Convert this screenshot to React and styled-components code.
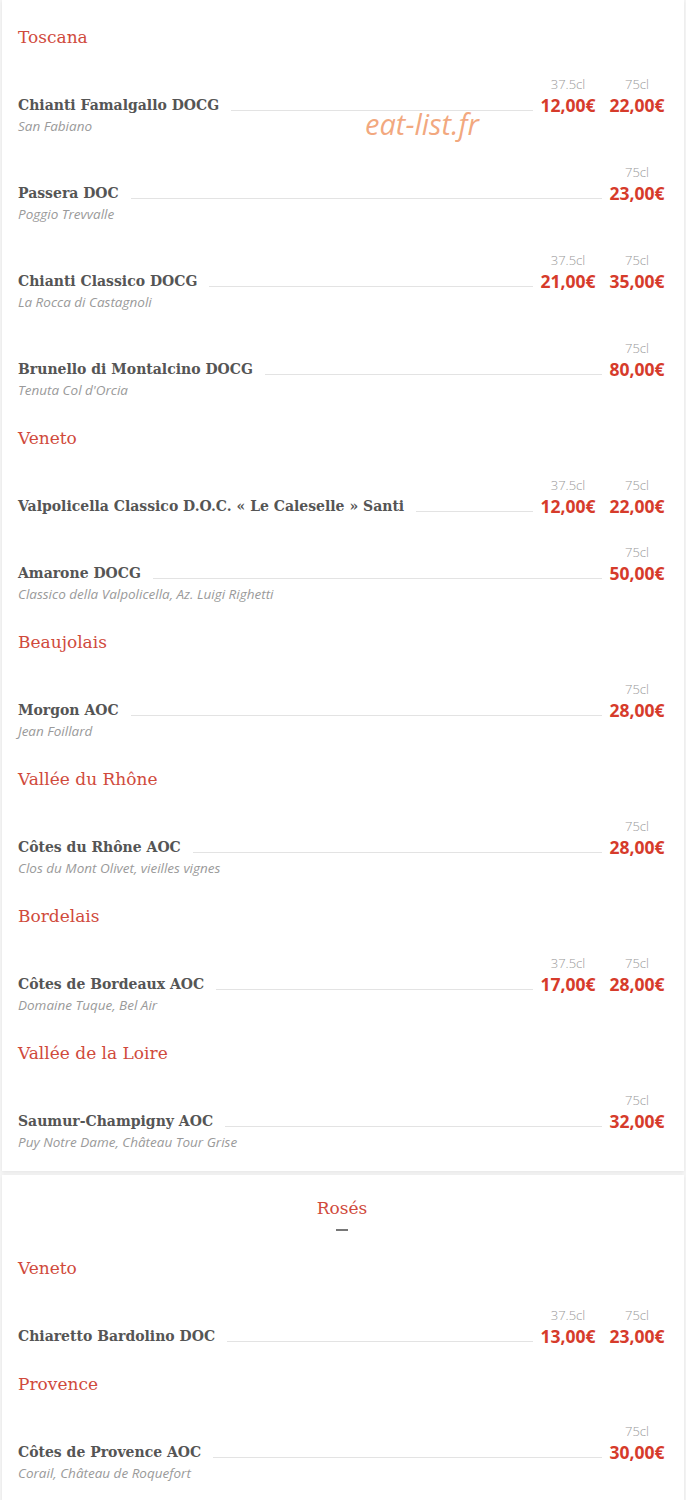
import React from 'react';
import styled, { createGlobalStyle } from 'styled-components';

const GlobalStyle = createGlobalStyle`
  body {
    margin: 0;
    background: #f6f6f6;
    font-family: "Open Sans", "Liberation Sans", sans-serif;
  }
`;

const Page = styled.div`
  display: flex;
  flex-direction: column;
  gap: 4px;
  padding: 0 2px 3px;
`;

const Card = styled.section`
  position: relative;
  background: #fff;
  box-shadow: 0 1px 4px rgba(0, 0, 0, 0.08);
  padding: ${p => (p.$titled ? '21px' : '25px')} 18px 18px 16px;
`;

const Watermark = styled.div`
  position: absolute;
  left: 363px;
  top: 104px;
  font-family: "Open Sans", sans-serif;
  font-style: italic;
  font-size: 29px;
  color: rgba(238, 140, 85, 0.75);
  pointer-events: none;
`;

const CardTitle = styled.h2`
  margin: 0;
  text-align: center;
  font-family: "DejaVu Serif", serif;
  font-weight: normal;
  font-size: 17px;
  line-height: 24px;
  color: #d04a3c;
`;

const Dash = styled.div`
  width: 12px;
  height: 2px;
  background: #777;
  margin: 9px auto 25px;
`;

const Region = styled.h3`
  margin: 0 0 25px;
  font-family: "DejaVu Serif", serif;
  font-weight: normal;
  font-size: 17px;
  line-height: 24px;
  color: #d04a3c;
`;

const Group = styled.div``;

const Item = styled.div`
  margin-bottom: 25px;
  ${Group}:last-child &:last-child {
    margin-bottom: 0;
  }
`;

const MainRow = styled.div`
  display: flex;
  align-items: flex-end;
`;

const Name = styled.div`
  font-family: "DejaVu Serif", serif;
  font-weight: bold;
  font-size: 14px;
  line-height: 22px;
  color: #555;
  white-space: nowrap;
`;

const Leader = styled.div`
  flex: 1;
  height: 1px;
  background: #e3e3e3;
  margin: 0 6px 5px 12px;
`;

const Prices = styled.div`
  display: flex;
  gap: 11px;
`;

const PriceCol = styled.div`
  display: flex;
  flex-direction: column;
  align-items: center;
  width: 58px;
`;

const Size = styled.div`
  font-size: 13px;
  line-height: 20px;
  color: #999;
  font-weight: 300;
`;

const Price = styled.div`
  font-size: 17.5px;
  line-height: 22px;
  font-weight: bold;
  color: #d63b2b;
  white-space: nowrap;
`;

const Sub = styled.div`
  font-size: 13.5px;
  line-height: 21px;
  font-style: italic;
  color: #9a9a9a;
`;

const reds = [
  {
    region: 'Toscana',
    items: [
      { name: 'Chianti Famalgallo DOCG', sub: 'San Fabiano', prices: [['37.5cl', '12,00€'], ['75cl', '22,00€']] },
      { name: 'Passera DOC', sub: 'Poggio Trevvalle', prices: [['75cl', '23,00€']] },
      { name: 'Chianti Classico DOCG', sub: 'La Rocca di Castagnoli', prices: [['37.5cl', '21,00€'], ['75cl', '35,00€']] },
      { name: 'Brunello di Montalcino DOCG', sub: "Tenuta Col d'Orcia", prices: [['75cl', '80,00€']] },
    ],
  },
  {
    region: 'Veneto',
    items: [
      { name: 'Valpolicella Classico D.O.C. « Le Caleselle » Santi', prices: [['37.5cl', '12,00€'], ['75cl', '22,00€']] },
      { name: 'Amarone DOCG', sub: 'Classico della Valpolicella, Az. Luigi Righetti', prices: [['75cl', '50,00€']] },
    ],
  },
  {
    region: 'Beaujolais',
    items: [{ name: 'Morgon AOC', sub: 'Jean Foillard', prices: [['75cl', '28,00€']] }],
  },
  {
    region: 'Vallée du Rhône',
    items: [{ name: 'Côtes du Rhône AOC', sub: 'Clos du Mont Olivet, vieilles vignes', prices: [['75cl', '28,00€']] }],
  },
  {
    region: 'Bordelais',
    items: [{ name: 'Côtes de Bordeaux AOC', sub: 'Domaine Tuque, Bel Air', prices: [['37.5cl', '17,00€'], ['75cl', '28,00€']] }],
  },
  {
    region: 'Vallée de la Loire',
    items: [{ name: 'Saumur-Champigny AOC', sub: 'Puy Notre Dame, Château Tour Grise', prices: [['75cl', '32,00€']] }],
  },
];

const roses = [
  {
    region: 'Veneto',
    items: [{ name: 'Chiaretto Bardolino DOC', prices: [['37.5cl', '13,00€'], ['75cl', '23,00€']] }],
  },
  {
    region: 'Provence',
    items: [{ name: 'Côtes de Provence AOC', sub: 'Corail, Château de Roquefort', prices: [['75cl', '30,00€']] }],
  },
];

const Wine = ({ name, sub, prices }) => (
  <Item>
    <MainRow>
      <Name>{name}</Name>
      <Leader />
      <Prices>
        {prices.map(([size, price]) => (
          <PriceCol key={size}>
            <Size>{size}</Size>
            <Price>{price}</Price>
          </PriceCol>
        ))}
      </Prices>
    </MainRow>
    {sub && <Sub>{sub}</Sub>}
  </Item>
);

const Groups = ({ data }) =>
  data.map(g => (
    <Group key={g.region}>
      <Region>{g.region}</Region>
      {g.items.map(it => (
        <Wine key={it.name} {...it} />
      ))}
    </Group>
  ));

export default function App() {
  return (
    <>
      <GlobalStyle />
      <Page>
        <Card>
          <Watermark>eat-list.fr</Watermark>
          <Groups data={reds} />
        </Card>
        <Card $titled>
          <CardTitle>Rosés</CardTitle>
          <Dash />
          <Groups data={roses} />
        </Card>
      </Page>
    </>
  );
}
